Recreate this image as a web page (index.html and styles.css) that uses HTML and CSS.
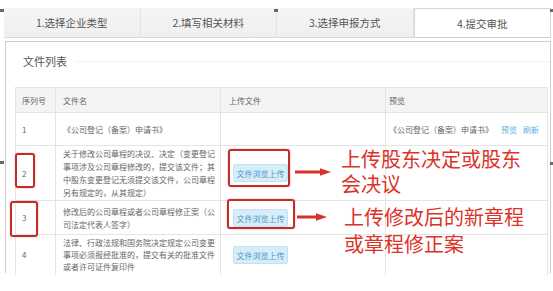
FILE: index.html
```html
<!DOCTYPE html>
<html lang="zh-CN">
<head>
<meta charset="utf-8">
<title>提交审批</title>
<link rel="stylesheet" href="styles.css">
</head>
<body>
<div class="page">
  <div class="tabs">
    <div class="tab">1.选择企业类型</div>
    <div class="tab">2.填写相关材料</div>
    <div class="tab">3.选择申报方式</div>
    <div class="tab active">4.提交审批</div>
  </div>
  <div class="box">
    <div class="legend"><span class="legend-title">文件列表</span></div>
    <table class="files">
      <colgroup>
        <col class="c-no"><col class="c-name"><col class="c-up"><col class="c-pre">
      </colgroup>
      <thead>
        <tr class="r-head"><th class="no">序列号</th><th class="name">文件名</th><th class="up">上传文件</th><th class="pre">预览</th></tr>
      </thead>
      <tbody>
        <tr class="r1">
          <td class="no">1</td>
          <td class="name">《公司登记（备案）申请书》</td>
          <td class="up"></td>
          <td class="pre">《公司登记（备案）申请书》<a class="link first">预览</a><a class="link">刷新</a></td>
        </tr>
        <tr class="r2">
          <td class="no">2</td>
          <td class="name">关于修改公司章程的决议、决定（变更登记事项涉及公司章程修改的，提交该文件；其中股东变更登记无须提交该文件，公司章程另有规定的，从其规定）</td>
          <td class="up"><span class="btn">文件浏览上传</span></td>
          <td class="pre"></td>
        </tr>
        <tr class="r3">
          <td class="no">3</td>
          <td class="name">修改后的公司章程或者公司章程修正案（公司法定代表人签字）</td>
          <td class="up"><span class="btn">文件浏览上传</span></td>
          <td class="pre"></td>
        </tr>
        <tr class="r4">
          <td class="no">4</td>
          <td class="name">法律、行政法规和国务院决定规定公司变更事项必须报经批准的，提交有关的批准文件或者许可证件复印件</td>
          <td class="up"><span class="btn">文件浏览上传</span></td>
          <td class="pre"></td>
        </tr>
      </tbody>
    </table>
  </div>

  <div class="mark mark-no2"></div>
  <div class="mark mark-no3"></div>
  <div class="mark mark-btn2"></div>
  <div class="mark mark-btn3"></div>

  <svg class="arrow arrow-1" width="36" height="10" viewBox="0 0 36 10">
    <path d="M0 5H27" stroke="#d5322b" stroke-width="3"/>
    <path d="M25 1.2L36 5L25 8.8Z" fill="#d5322b"/>
  </svg>
  <svg class="arrow arrow-2" width="30" height="10" viewBox="0 0 30 10">
    <path d="M0 5H21" stroke="#d5322b" stroke-width="3"/>
    <path d="M19 1.2L30 5L19 8.8Z" fill="#d5322b"/>
  </svg>

  <div class="note note-1">上传股东决定或股东<br>会决议</div>
  <div class="note note-2">上传修改后的新章程<br>或章程修正案</div>

  <span class="handle h1"></span>
  <span class="handle h2"></span>
  <span class="handle h3"></span>
  <span class="handle h4"></span>
  <span class="handle h5"></span>
</div>
</body>
</html>
```

FILE: styles.css
```css
html, body {
  margin: 0;
  padding: 0;
  background: #ffffff;
}

.page {
  position: relative;
  width: 553px;
  height: 291px;
  overflow: hidden;
  padding-top: 8px;
  box-sizing: border-box;
  font-family: "Noto Sans CJK SC", "Noto Sans", sans-serif;
  color: #666;
}

/* ---------- tabs ---------- */
.tabs {
  display: flex;
  margin-left: 4px;
  width: 547px;
  height: 30px;
}

.tab {
  flex: 1;
  display: flex;
  align-items: center;
  justify-content: center;
  background: linear-gradient(#f4f4f4, #f0f0f0);
  border-right: 1px solid #e2e2e2;
  border-bottom: 1px solid #d8d8d8;
  font-size: 10.5px;
  color: #555;
  box-sizing: border-box;
}

.tab.active {
  background: #ffffff;
  border: 1px solid #d6d6d6;
  border-bottom: 1px solid #d0d0d0;
}

/* ---------- content box ---------- */
.box {
  margin-top: 3px;
  margin-left: 5px;
  width: 546px;
  height: 232px;
  border: 1px solid #cdcdcd;
  border-bottom: 0;
  box-sizing: border-box;
}

.legend {
  display: flex;
  align-items: center;
  padding: 11px 0 0 17px;
  height: 16px;
}

.legend-title {
  font-size: 11px;
  line-height: 16px;
  color: #555;
}

.legend::after {
  content: "";
  flex: 1;
  margin-left: 8px;
  border-top: 1px solid #f1f1f1;
}

/* ---------- table ---------- */
.files {
  margin: 18px 0 0 9px;
  width: 532px;
  table-layout: fixed;
  border-collapse: collapse;
  font-size: 8px;
  line-height: 13px;
  color: #666;
}

.c-no { width: 40px; }
.c-name { width: 165px; }
.c-up { width: 165px; }
.c-pre { width: 162px; }

.files th,
.files td {
  border: 1px solid #e4e4e4;
  vertical-align: middle;
  text-align: left;
  font-weight: normal;
  padding: 0;
}

.files th {
  background: #f4f4f4;
  color: #666;
}

.files .no { padding-left: 6px; }
.files .name { padding: 0 3px 0 7px; }
.files .up { padding-left: 8px; }
.files .pre { padding-left: 3px; }

.r-head { height: 25px; }
.r1 { height: 33px; }
.r2 { height: 55px; }
.r3 { height: 34px; }
.r4 { height: 40px; }
.r4 td { border-bottom: 0; line-height: 12px; }

.link {
  color: #5cb3de;
  margin-left: 6px;
}
.link.first { margin-left: 8px; }

.btn {
  display: inline-block;
  margin-left: 4px;
  width: 55px;
  height: 18px;
  line-height: 17px;
  text-align: center;
  background: #d7eef9;
  border: 1px solid #c2e2f1;
  border-radius: 2px;
  box-sizing: border-box;
  color: #4a97c6;
  font-size: 8px;
}

/* ---------- annotations ---------- */
.mark {
  position: absolute;
  border: 2.5px solid #bf2f29;
  border-radius: 3px;
  box-shadow: 0 0 2px rgba(210, 60, 50, 0.45);
  box-sizing: border-box;
}
.mark-no2 { left: 15px; top: 153px; width: 20px; height: 35px; }
.mark-no3 { left: 10px; top: 201px; width: 28px; height: 36px; }
.mark-btn2 { left: 228px; top: 149px; width: 62px; height: 38px; }
.mark-btn3 { left: 227px; top: 199px; width: 68px; height: 30px; }

.arrow { position: absolute; }
.arrow-1 { left: 295px; top: 167px; }
.arrow-2 { left: 297px; top: 212px; }

.note {
  position: absolute;
  font-size: 20px;
  line-height: 25px;
  color: #dc3329;
  white-space: nowrap;
}
.note-1 { left: 341px; top: 146px; }
.note-2 { left: 344px; top: 203px; line-height: 27px; }

.handle {
  position: absolute;
  width: 4px;
  height: 3px;
  background: #6a6a6a;
}
.h1 { left: 0; top: 9px; }
.h2 { left: 274px; top: 9px; }
.h3 { left: 550px; top: 9px; }
.h4 { left: 0; top: 161px; }
.h5 { left: 550px; top: 162px; }
```
